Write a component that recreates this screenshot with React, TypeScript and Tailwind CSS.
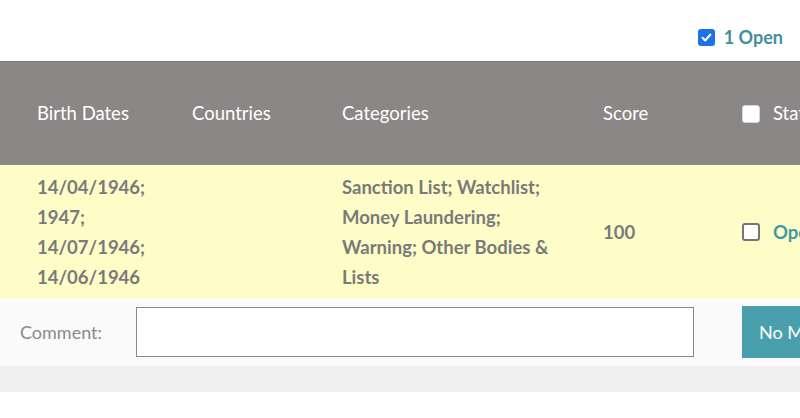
const font = { fontFamily: '"Lato", "Open Sans", sans-serif' };

function Box({ checked, light }: { checked?: boolean; light?: boolean }) {
  if (checked) {
    return (
      <span className="flex h-[17px] w-[17px] items-center justify-center rounded-[3px] bg-[#1a73e8]">
        <svg viewBox="0 0 16 16" className="h-[13px] w-[13px]" fill="none" stroke="white" strokeWidth="2.6" strokeLinecap="round" strokeLinejoin="round">
          <path d="M3.2 8.4 6.4 11.6 12.8 4.4" />
        </svg>
      </span>
    );
  }
  return (
    <span
      className={
        light
          ? "block h-[18px] w-[18px] shrink-0 rounded-[3px] border border-[#d6d6d6] bg-white"
          : "block h-[18px] w-[18px] shrink-0 rounded-[3px] border-2 border-[#767676] bg-white"
      }
    />
  );
}

export default function App() {
  const cell = "pl-[15px]";
  const cols = "grid grid-cols-[155px_150px_261px_139px_1fr] pl-[22px]";
  return (
    <div className="h-[418px] w-[800px] overflow-hidden bg-white" style={font}>
      <div className="flex h-[61px] items-center justify-end gap-[9px] pr-[17px] pt-[14px]">
        <Box checked />
        <span className="text-[18px] font-bold text-[#3f8f9c]">1 Open</span>
      </div>

      <div className={`${cols} h-[104px] items-center border-t border-[#7b7877] bg-[#8b8786] text-[18.5px] text-white`}>
        <div className={cell}>Birth Dates</div>
        <div className={cell}>Countries</div>
        <div className={cell}>Categories</div>
        <div className={cell}>Score</div>
        <div className={`${cell} flex items-center gap-[13px] whitespace-nowrap`}>
          <Box light />
          <span>Status</span>
        </div>
      </div>

      <div className={`${cols} h-[133px] items-center bg-[#fefdc8] text-[18.5px] font-bold leading-[30px] text-[#7a7a7a]`}>
        <div className={cell}>
          14/04/1946;
          <br />
          1947;
          <br />
          14/07/1946;
          <br />
          14/06/1946
        </div>
        <div className={cell}></div>
        <div className={`${cell} pr-[20px]`}>Sanction List; Watchlist; Money Laundering; Warning; Other Bodies &amp; Lists</div>
        <div className={cell}>100</div>
        <div className={`${cell} flex items-center gap-[13px] whitespace-nowrap`}>
          <Box />
          <span className="text-[#3f9aa8]">Open</span>
        </div>
      </div>

      <div className="flex h-[68px] items-center bg-[#fafafa] pl-[20px]">
        <span className="w-[116px] shrink-0 text-[18px] text-[#8a8a8a]">Comment:</span>
        <div className="h-[50px] w-[558px] shrink-0 border border-[#8a8a8a] bg-white" />
        <button className="ml-[48px] h-[52px] shrink-0 whitespace-nowrap bg-[#4a9fad] px-[17px] text-[18px] text-white">
          No Match
        </button>
      </div>

      <div className="h-[26px] bg-[#f0f0f0]" />
    </div>
  );
}
